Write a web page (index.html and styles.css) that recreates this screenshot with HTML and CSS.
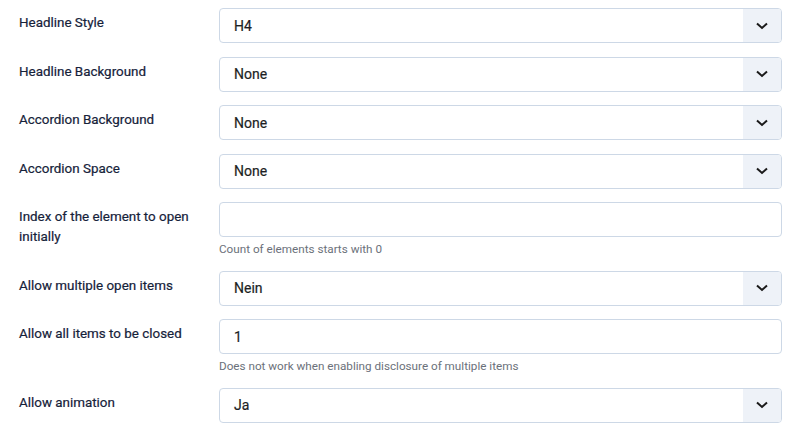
FILE: index.html
```html
<!DOCTYPE html>
<html>
<head>
<meta charset="utf-8">
<link rel="stylesheet" href="styles.css">
</head>
<body>
<div class="form">
  <div class="row">
    <div class="label">Headline Style</div>
    <div class="control">
      <div class="select"><span class="value">H4</span><span class="caret"><svg width="12" height="8" viewBox="0 0 12 8"><path d="M1 1.5 L6 6 L11 1.5" fill="none" stroke="#1a1a1a" stroke-width="2"/></svg></span></div>
    </div>
  </div>
  <div class="row">
    <div class="label">Headline Background</div>
    <div class="control">
      <div class="select"><span class="value">None</span><span class="caret"><svg width="12" height="8" viewBox="0 0 12 8"><path d="M1 1.5 L6 6 L11 1.5" fill="none" stroke="#1a1a1a" stroke-width="2"/></svg></span></div>
    </div>
  </div>
  <div class="row">
    <div class="label">Accordion Background</div>
    <div class="control">
      <div class="select"><span class="value">None</span><span class="caret"><svg width="12" height="8" viewBox="0 0 12 8"><path d="M1 1.5 L6 6 L11 1.5" fill="none" stroke="#1a1a1a" stroke-width="2"/></svg></span></div>
    </div>
  </div>
  <div class="row">
    <div class="label">Accordion Space</div>
    <div class="control">
      <div class="select"><span class="value">None</span><span class="caret"><svg width="12" height="8" viewBox="0 0 12 8"><path d="M1 1.5 L6 6 L11 1.5" fill="none" stroke="#1a1a1a" stroke-width="2"/></svg></span></div>
    </div>
  </div>
  <div class="row">
    <div class="label">Index of the element to open initially</div>
    <div class="control">
      <div class="input"><span class="value"></span></div>
      <div class="help">Count of elements starts with 0</div>
    </div>
  </div>
  <div class="row">
    <div class="label">Allow multiple open items</div>
    <div class="control">
      <div class="select"><span class="value">Nein</span><span class="caret"><svg width="12" height="8" viewBox="0 0 12 8"><path d="M1 1.5 L6 6 L11 1.5" fill="none" stroke="#1a1a1a" stroke-width="2"/></svg></span></div>
    </div>
  </div>
  <div class="row">
    <div class="label">Allow all items to be closed</div>
    <div class="control">
      <div class="input"><span class="value">1</span></div>
      <div class="help">Does not work when enabling disclosure of multiple items</div>
    </div>
  </div>
  <div class="row">
    <div class="label">Allow animation</div>
    <div class="control">
      <div class="select"><span class="value">Ja</span><span class="caret"><svg width="12" height="8" viewBox="0 0 12 8"><path d="M1 1.5 L6 6 L11 1.5" fill="none" stroke="#1a1a1a" stroke-width="2"/></svg></span></div>
    </div>
  </div>
</div>
</body>
</html>
```
FILE: styles.css
```css
html, body {
  margin: 0;
  padding: 0;
  background: #fff;
}
body {
  font-family: Roboto, "Liberation Sans", sans-serif;
  color: #1f2d45;
}
.form {
  padding: 8px 18px 0 19px;
  display: flex;
  flex-direction: column;
  gap: 13.5px;
}
.row {
  display: grid;
  grid-template-columns: 200px 1fr;
}
.label {
  font-size: 13.4px;
  font-weight: 400;
  line-height: 20px;
  padding-top: 5px;
  padding-right: 10px;
  color: #16223a;
  -webkit-text-stroke: 0.2px #16223a;
}
.select, .input {
  box-sizing: border-box;
  height: 35px;
  border: 1px solid #cdd8e6;
  border-radius: 4px;
  display: flex;
  align-items: center;
  overflow: hidden;
  background: #fff;
}
.value {
  flex: 1;
  padding-left: 14px;
  font-size: 14px;
  color: #1d1f24;
  -webkit-text-stroke: 0.2px #1d1f24;
}
.caret {
  width: 38px;
  height: 100%;
  background: #eef2f8;
  display: flex;
  align-items: center;
  justify-content: center;
}
.caret svg {
  display: block;
}
.help {
  font-size: 11.7px;
  color: #6b717a;
  line-height: 16px;
  margin-top: 4px;
}
```
